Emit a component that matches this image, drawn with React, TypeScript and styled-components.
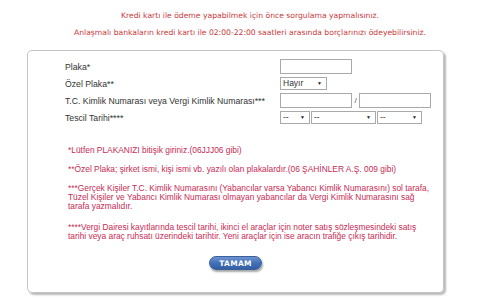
import React, { useState } from 'react';
import styled, { createGlobalStyle } from 'styled-components';

const GlobalStyle = createGlobalStyle`
  body {
    margin: 0;
    background: #ffffff;
    font-family: "Liberation Sans", Arial, sans-serif;
  }
`;

const Page = styled.div`
  width: 500px;
  height: 300px;
  overflow: hidden;
  padding-top: 11px;
  box-sizing: border-box;
`;

const Warning = styled.p`
  margin: 0 0 8px 0;
  text-align: center;
  font-family: "DejaVu Sans", Verdana, sans-serif;
  font-size: 7.65px;
  line-height: 9px;
  color: #c83a40;
`;

const Panel = styled.div`
  margin: 13px 0 0 27px;
  width: 417px;
  height: 243px;
  box-sizing: border-box;
  border: 1px solid #c4c4c4;
  border-radius: 5px;
  box-shadow: 2px 2px 2px rgba(0, 0, 0, 0.28);
  padding: 8px 0 0 37px;
`;

const Form = styled.div`
  display: grid;
  grid-template-columns: 215px auto;
  row-gap: 2px;
  align-items: center;
`;

const Label = styled.label`
  font-size: 8.7px;
  color: #333333;
`;

const Row = styled.div`
  display: flex;
  align-items: center;
  height: 15px;
`;

const TextInput = styled.input<{ $w: number }>`
  width: ${(p) => p.$w}px;
  height: 15px;
  box-sizing: border-box;
  border: 1px solid #a9a9a9;
  padding: 0 3px;
  font-size: 8px;
  outline: none;
`;

const Slash = styled.span`
  width: 7px;
  text-align: center;
  font-size: 8px;
  color: #555;
`;

const SelectWrap = styled.div<{ $w: number }>`
  position: relative;
  width: ${(p) => p.$w}px;
  height: 13px;
  margin-right: 1px;
`;

const Select = styled.select`
  appearance: none;
  display: block;
  width: 100%;
  height: 100%;
  box-sizing: border-box;
  border: 1px solid #a9a9a9;
  background: #fff;
  padding: 0 2px;
  font-family: "Liberation Sans", Arial, sans-serif;
  font-size: 8.5px;
  line-height: 11px;
  color: #333;
  outline: none;
`;

const Arrow = styled.span`
  position: absolute;
  right: 5px;
  top: 4px;
  font-size: 5px;
  line-height: 5px;
  color: #222;
  pointer-events: none;
`;

const Notes = styled.div`
  margin: 21px 0 0 3px;
  width: 365px;
`;

const Note = styled.p<{ $gap?: number }>`
  margin: 0 0 ${(p) => p.$gap ?? 10}px 0;
  font-size: 8.4px;
  line-height: 9px;
  color: #c72c55;
`;

const ButtonRow = styled.div`
  display: flex;
  justify-content: center;
  margin: 15px 37px 0 0;
`;

const Button = styled.button`
  width: 53px;
  height: 14px;
  border: 1px solid #3a5f9c;
  border-radius: 8px;
  background: linear-gradient(#6e93d0, #4270b6 50%, #345fa4);
  box-shadow: 1px 2px 2px rgba(0, 0, 0, 0.35);
  color: #ffffff;
  font-family: "DejaVu Sans", Verdana, sans-serif;
  font-weight: bold;
  font-size: 7.5px;
  letter-spacing: 0.3px;
  padding: 0;
  cursor: pointer;
`;

const Dropdown = ({ w, options }: { w: number; options: string[] }) => (
  <SelectWrap $w={w}>
    <Select defaultValue={options[0]}>
      {options.map((o) => (
        <option key={o}>{o}</option>
      ))}
    </Select>
    <Arrow>▼</Arrow>
  </SelectWrap>
);

const App = () => {
  const [plaka, setPlaka] = useState('');

  return (
    <Page>
      <GlobalStyle />
      <Warning>Kredi kartı ile ödeme yapabilmek için önce sorgulama yapmalısınız.</Warning>
      <Warning>
        Anlaşmalı bankaların kredi kartı ile 02:00-22:00 saatleri arasında borçlarınızı ödeyebilirsiniz.
      </Warning>
      <Panel>
        <Form>
          <Label>Plaka*</Label>
          <Row>
            <TextInput $w={72} value={plaka} onChange={(e) => setPlaka(e.target.value)} />
          </Row>
          <Label>Özel Plaka**</Label>
          <Row>
            <Dropdown w={47} options={['Hayır', 'Evet']} />
          </Row>
          <Label>T.C. Kimlik Numarası veya Vergi Kimlik Numarası***</Label>
          <Row>
            <TextInput $w={72} />
            <Slash>/</Slash>
            <TextInput $w={72} />
          </Row>
          <Label>Tescil Tarihi****</Label>
          <Row>
            <Dropdown w={30} options={['--']} />
            <Dropdown w={65} options={['--']} />
            <Dropdown w={45} options={['--']} />
          </Row>
        </Form>
        <Notes>
          <Note>*Lütfen PLAKANIZI bitişik giriniz.(06JJJ06 gibi)</Note>
          <Note>**Özel Plaka; şirket ismi, kişi ismi vb. yazılı olan plakalardır.(06 ŞAHİNLER A.Ş. 009 gibi)</Note>
          <Note $gap={12}>
            ***Gerçek Kişiler T.C. Kimlik Numarasını (Yabancılar varsa Yabancı Kimlik Numarasını) sol tarafa,
            Tüzel Kişiler ve Yabancı Kimlik Numarası olmayan yabancılar da Vergi Kimlik Numarasını sağ tarafa
            yazmalıdır.
          </Note>
          <Note $gap={0}>
            ****Vergi Dairesi kayıtlarında tescil tarihi, ikinci el araçlar için noter satış sözleşmesindeki satış
            tarihi veya araç ruhsatı üzerindeki tarihtir. Yeni araçlar için ise aracın trafiğe çıkış tarihidir.
          </Note>
        </Notes>
        <ButtonRow>
          <Button>TAMAM</Button>
        </ButtonRow>
      </Panel>
    </Page>
  );
};

export default App;
